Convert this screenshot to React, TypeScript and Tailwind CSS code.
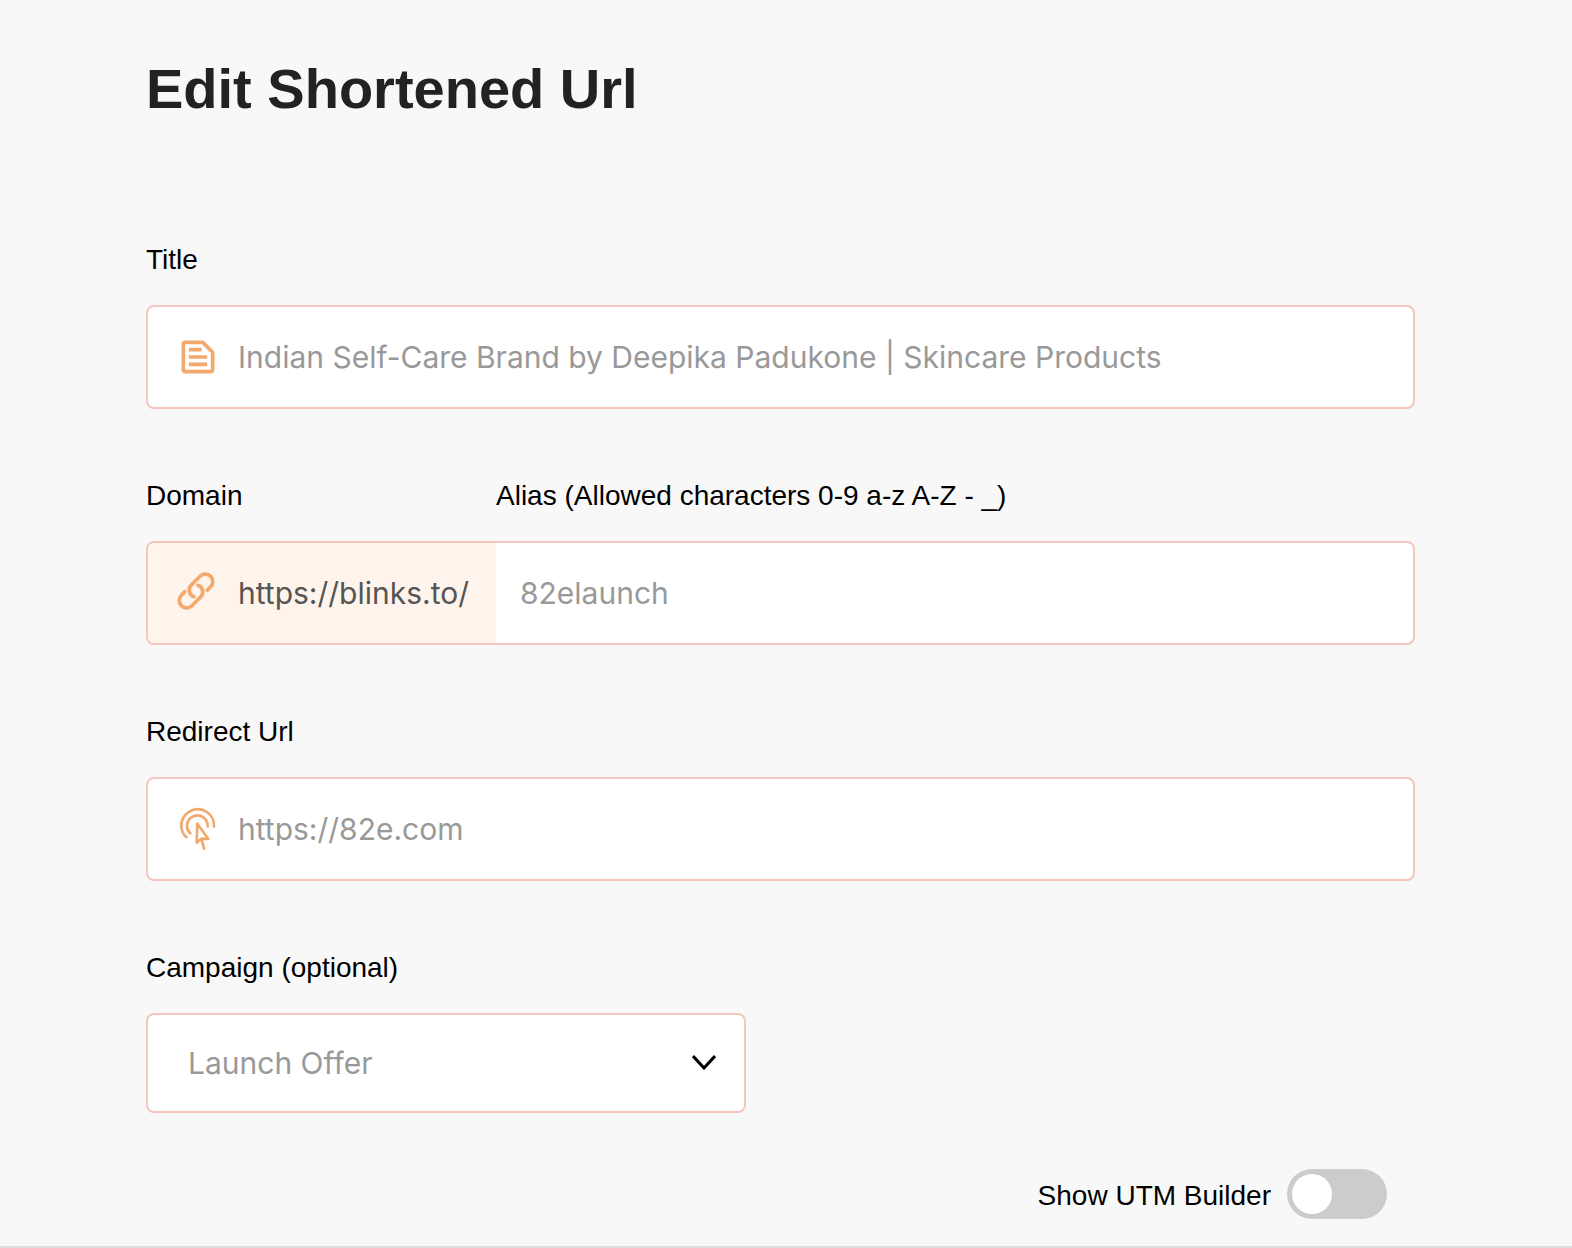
import type { ReactNode } from "react";
import { MdOutlineTextSnippet } from "react-icons/md";

const box = "flex items-stretch overflow-hidden rounded-lg border-2 border-[#f5c6bd] bg-white";
const label = "text-[28px] leading-8 text-black";
const field = "flex flex-col gap-[29px]";
const control =
  "min-w-0 flex-1 bg-transparent font-[Inter,sans-serif] text-[30px] leading-10 text-[#999999] outline-none";

function LinkIcon() {
  return (
    <svg viewBox="18 18 132 132" className="size-11" fill="none" stroke="currentColor" strokeWidth="11" strokeLinecap="round" strokeLinejoin="round" aria-hidden="true">
      <path d="M112 76L121 66A21 21 0 0 0 91 33L64 60A21 21 0 0 0 72 95" />
      <path d="M44 80L35 90A21 21 0 0 0 65 123L92 96A21 21 0 0 0 84 61" />
    </svg>
  );
}

function ClickIcon() {
  return (
    <svg viewBox="18 21 132 132" className="size-11" fill="none" stroke="currentColor" strokeWidth="8" strokeLinecap="round" strokeLinejoin="round" aria-hidden="true">
      <path d="M49 112A49 49 0 1 1 132 79" />
      <path d="M61 100A31 31 0 1 1 113 79" />
      <path d="M82 71L80 128L94 116L115 117ZM95 118L102 146" />
    </svg>
  );
}

function IconCell({ children }: { children: ReactNode }) {
  return <span className="flex shrink-0 items-center pr-[18px] pl-7 text-[#f2a96b]">{children}</span>;
}

export default function App() {
  return (
    <main className="flex min-h-screen flex-col bg-[#f8f8f8] font-['Liberation_Sans',sans-serif]">
      <form className="flex flex-1 flex-col pt-[51px] pr-[157px] pb-6 pl-[146px]">
        <h1 className="text-[56px] leading-[76px] font-bold text-[#222222]">Edit Shortened Url</h1>

        <div className="mt-[117px] flex flex-col gap-[71px]">
          <div className={field}>
            <label htmlFor="title" className={label}>Title</label>
            <div className={`${box} h-[104px]`}>
              <IconCell><MdOutlineTextSnippet className="size-11" /></IconCell>
              <input id="title" className={control} defaultValue="Indian Self-Care Brand by Deepika Padukone | Skincare Products" />
            </div>
          </div>

          <div className={field}>
            <div className="flex">
              <label htmlFor="domain" className={`${label} w-[350px]`}>Domain</label>
              <label htmlFor="alias" className={label}>Alias (Allowed characters 0-9 a-z A-Z - _)</label>
            </div>
            <div className={`${box} h-[104px]`}>
              <div className="flex w-[348px] shrink-0 bg-[#fff4eb]">
                <IconCell><LinkIcon /></IconCell>
                <input id="domain" readOnly className="min-w-0 flex-1 bg-transparent font-[Inter,sans-serif] text-[30px] leading-10 text-[#555555] outline-none" defaultValue="https://blinks.to/" />
              </div>
              <input id="alias" className={`${control} pl-6`} defaultValue="82elaunch" />
            </div>
          </div>

          <div className={field}>
            <label htmlFor="redirect" className={label}>Redirect Url</label>
            <div className={`${box} h-[104px]`}>
              <IconCell><ClickIcon /></IconCell>
              <input id="redirect" className={control} defaultValue="https://82e.com" />
            </div>
          </div>

          <div className={field}>
            <label htmlFor="campaign" className={label}>Campaign (optional)</label>
            <div className={`${box} relative h-[100px] w-full max-w-[600px]`}>
              <select id="campaign" className={`${control} appearance-none pl-10`}>
                <option>Launch Offer</option>
              </select>
              <svg viewBox="0 0 24 16" className="pointer-events-none absolute top-10 right-7 h-4 w-6" fill="none" stroke="black" strokeWidth="3" aria-hidden="true">
                <path d="M1 1l11 12L23 1" />
              </svg>
            </div>
          </div>
        </div>

        <div className="mt-14 flex items-center justify-end gap-4 pr-7">
          <label htmlFor="utm" className={`${label} pt-1`}>Show UTM Builder</label>
          <input
            id="utm"
            type="checkbox"
            role="switch"
            className="h-[50px] w-[100px] appearance-none rounded-full bg-[#cccccc] p-[5px] before:block before:size-10 before:rounded-full before:bg-white before:content-[''] checked:bg-[#f2a96b] checked:pl-[55px]"
          />
        </div>
      </form>
      <hr className="border-t-2 border-[#dddddd]" />
    </main>
  );
}
